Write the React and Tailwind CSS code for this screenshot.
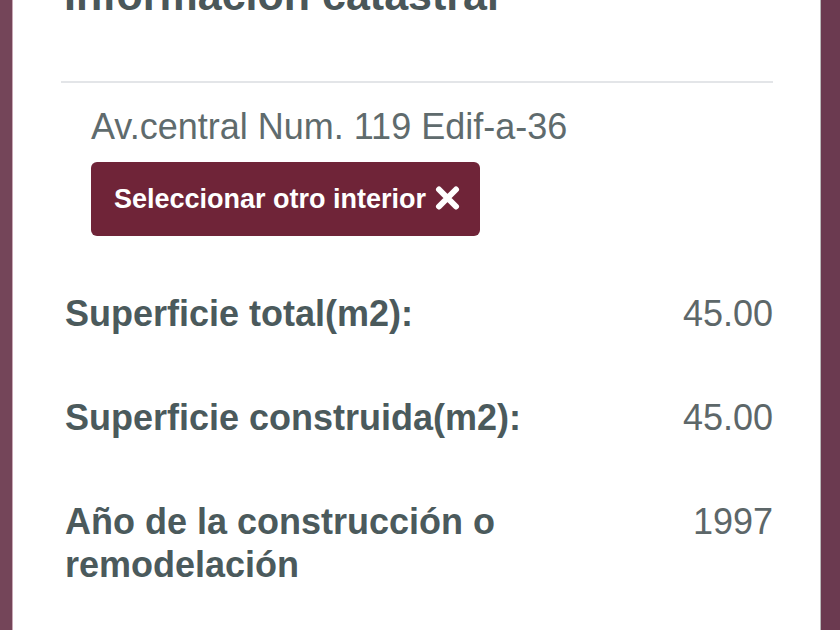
import { useState } from 'react'

const rows = [
  { label: 'Superficie total(m2):', value: '45.00' },
  { label: 'Superficie construida(m2):', value: '45.00' },
  { label: 'Año de la construcción o remodelación', value: '1997' },
];

function App() {
  const [interior, setInterior] = useState('Av.central Num. 119 Edif-a-36');

  return (
    <div className="flex h-[630px] overflow-hidden bg-[#744559] font-['Liberation_Sans',Arial,sans-serif]">
      <div className="w-[13px] shrink-0 border-r border-[#c9a9b6]" />

      <div className="flex-1 bg-white border-r border-[#b9b9b9] pl-[48px] pr-[47px]">
        <h2 className="-mt-[26px] text-[43px] leading-[43px] font-bold text-[#4a5759] pl-[3px]">
          Información catastral
        </h2>

        <hr className="mt-[64px] border-0 border-t-2 border-[#e3e5e8]" />

        <div className="pl-[30px] pt-[24px]">
          <p className="text-[36px] leading-[40px] text-[#5f6b6d]">{interior}</p>
          <button
            onClick={() => setInterior('')}
            className="mt-[15px] flex h-[74px] items-center gap-[9px] rounded-[6px] bg-[#6f2438] pl-[23px] pr-[20px] text-[27px] leading-[30px] font-bold text-white"
          >
            Seleccionar otro interior
            <svg width="25" height="24" viewBox="0 0 25 24" className="mb-[2px]">
              <path d="M4 3.5 L21 20.5 M21 3.5 L4 20.5" stroke="white" strokeWidth="6" strokeLinecap="round" />
            </svg>
          </button>
        </div>

        <div className="mt-[56px] flex flex-col gap-[61px] pl-[4px]">
          {rows.map((row) => (
            <div key={row.label} className="flex items-start justify-between">
              <span className="max-w-[470px] text-[36px] leading-[43px] font-bold text-[#4b5a5c]">
                {row.label}
              </span>
              <span className="text-[36px] leading-[43px] text-[#5d6769]">{row.value}</span>
            </div>
          ))}
        </div>
      </div>

      <div className="w-[19px] shrink-0 bg-[#6b3a50]" />
    </div>
  );
}

export default App;
